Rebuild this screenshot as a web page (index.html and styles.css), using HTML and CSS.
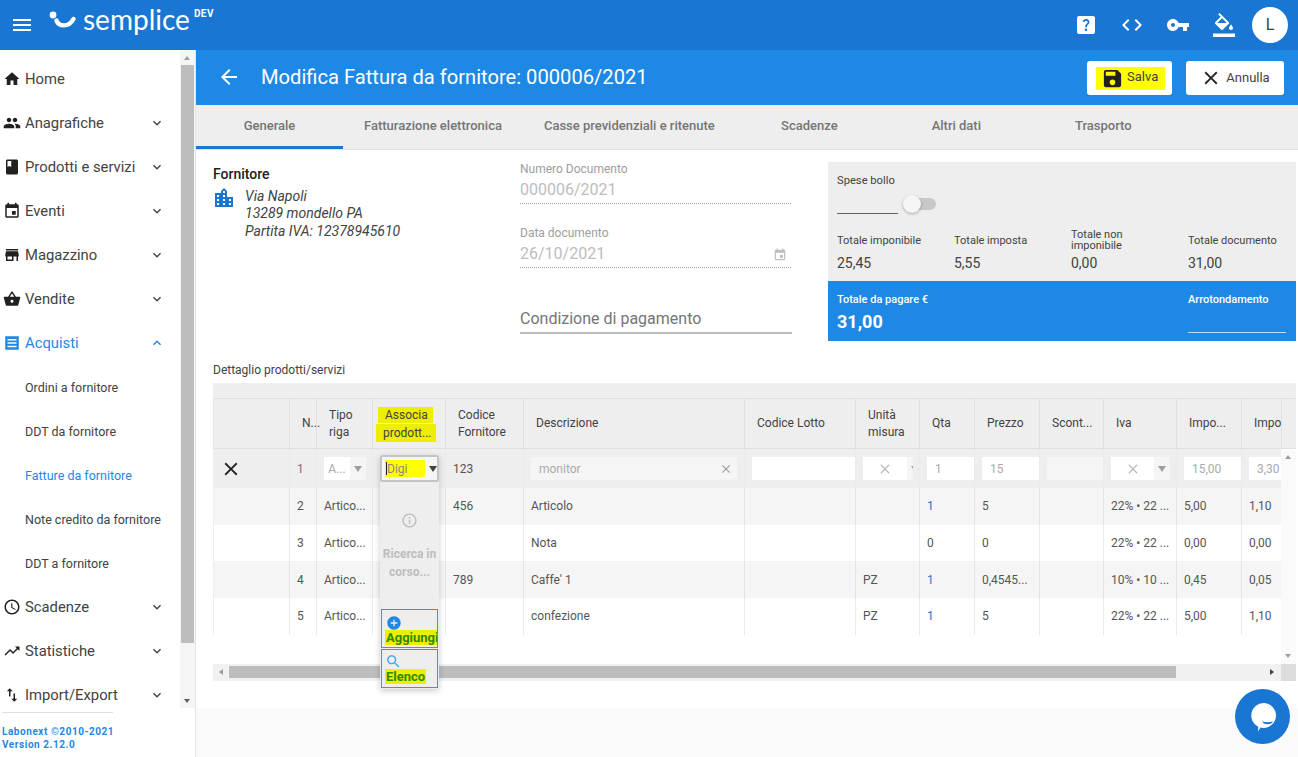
FILE: index.html
```html
<!DOCTYPE html>
<html lang="it">
<head>
<meta charset="utf-8">
<title>Modifica Fattura da fornitore</title>
<link rel="stylesheet" href="styles.css">
</head>
<body>
<svg class="defs" aria-hidden="true">
<symbol id="i-menu" viewBox="0 0 24 24"><path d="M3 18h18v-2H3v2zm0-5h18v-2H3v2zm0-7v2h18V6H3z"/></symbol>
<symbol id="i-home" viewBox="0 0 24 24"><path d="M10 20v-6h4v6h5v-8h3L12 3 2 12h3v8z"/></symbol>
<symbol id="i-people" viewBox="0 0 24 24"><path d="M16 11c1.66 0 2.99-1.34 2.99-3S17.66 5 16 5c-1.66 0-3 1.34-3 3s1.34 3 3 3zm-8 0c1.66 0 2.99-1.34 2.99-3S9.66 5 8 5C6.34 5 5 6.34 5 8s1.34 3 3 3zm0 2c-2.33 0-7 1.17-7 3.5V19h14v-2.5c0-2.33-4.67-3.5-7-3.5zm8 0c-.29 0-.62.02-.97.05 1.16.84 1.97 1.97 1.97 3.45V19h6v-2.5c0-2.33-4.67-3.5-7-3.5z"/></symbol>
<symbol id="i-book" viewBox="0 0 24 24"><path d="M18 2H6c-1.1 0-2 .9-2 2v16c0 1.1.9 2 2 2h12c1.1 0 2-.9 2-2V4c0-1.1-.9-2-2-2zM6 4h5v8l-2.5-1.5L6 12V4z"/></symbol>
<symbol id="i-event" viewBox="0 0 24 24"><path d="M17 12h-5v5h5v-5zM16 1v2H8V1H6v2H5c-1.11 0-1.99.9-1.99 2L3 19c0 1.1.89 2 2 2h14c1.1 0 2-.9 2-2V5c0-1.1-.9-2-2-2h-1V1h-2zm3 18H5V8h14v11z"/></symbol>
<symbol id="i-store" viewBox="0 0 24 24"><path d="M20 4H4v2h16V4zm1 10v-2l-1-5H4l-1 5v2h1v6h10v-6h4v6h2v-6h1zm-9 4H6v-4h6v4z"/></symbol>
<symbol id="i-basket" viewBox="0 0 24 24"><path d="M17.21 9l-4.38-6.56c-.19-.28-.51-.42-.83-.42-.32 0-.64.14-.83.43L6.79 9H2c-.55 0-1 .45-1 1 0 .09.01.18.04.27l2.54 9.27c.23.84 1 1.46 1.92 1.46h13c.92 0 1.69-.62 1.93-1.46l2.54-9.27L23 10c0-.55-.45-1-1-1h-4.79zM9 9l3-4.4L15 9H9zm3 8c-1.1 0-2-.9-2-2s.9-2 2-2 2 .9 2 2-.9 2-2 2z"/></symbol>
<symbol id="i-list" viewBox="0 0 24 24"><path fill-rule="evenodd" d="M3 3h18v18H3zM6 6.500h12v2H6zM6 11h12v2H6zM6 15.500h12v2H6z"/></symbol>
<symbol id="i-clock" viewBox="0 0 24 24"><path d="M11.99 2C6.47 2 2 6.48 2 12s4.47 10 9.99 10C17.52 22 22 17.52 22 12S17.52 2 11.99 2zM12 20c-4.42 0-8-3.58-8-8s3.58-8 8-8 8 3.58 8 8-3.58 8-8 8zm.5-13H11v6l5.25 3.15.75-1.23-4.5-2.67z"/></symbol>
<symbol id="i-trend" viewBox="0 0 24 24"><path d="M16 6l2.29 2.29-4.88 4.88-4-4L2 16.59 3.41 18l6-6 4 4 6.3-6.29L22 12V6z"/></symbol>
<symbol id="i-swap" viewBox="0 0 24 24"><path d="M9 3L5 6.99h3V14h2V6.99h3L9 3zm7 14.01V10h-2v7.01h-3L15 21l4-3.99h-3z"/></symbol>
<symbol id="i-down" viewBox="0 0 24 24"><path d="M16.59 8.59L12 13.17 7.41 8.59 6 10l6 6 6-6z"/></symbol>
<symbol id="i-up" viewBox="0 0 24 24"><path d="M12 8l-6 6 1.41 1.41L12 10.83l4.59 4.58L18 14z"/></symbol>
<symbol id="i-back" viewBox="0 0 24 24"><path d="M20 11H7.83l5.59-5.59L12 4l-8 8 8 8 1.41-1.41L7.83 13H20v-2z"/></symbol>
<symbol id="i-save" viewBox="0 0 24 24"><path d="M17 3H5c-1.11 0-2 .9-2 2v14c0 1.1.89 2 2 2h14c1.1 0 2-.9 2-2V7l-4-4zm-5 16c-1.66 0-3-1.34-3-3s1.34-3 3-3 3 1.34 3 3-1.34 3-3 3zm3-10H5V5h10v4z"/></symbol>
<symbol id="i-close" viewBox="0 0 24 24"><path d="M19 6.41L17.59 5 12 10.59 6.41 5 5 6.41 10.59 12 5 17.59 6.41 19 12 13.41 17.59 19 19 17.59 13.41 12z"/></symbol>
<symbol id="i-help" viewBox="0 0 24 24"><path d="M19 3H5c-1.1 0-2 .9-2 2v14c0 1.1.9 2 2 2h14c1.1 0 2-.9 2-2V5c0-1.1-.9-2-2-2zm-6.99 15c-.7 0-1.26-.56-1.26-1.26 0-.71.56-1.25 1.26-1.25.71 0 1.25.54 1.25 1.25-.01.69-.54 1.26-1.25 1.26zm3.01-7.4c-.76 1.11-1.48 1.46-1.87 2.17-.16.29-.22.48-.22 1.41h-1.82c0-.49-.08-1.29.31-1.98.49-.87 1.42-1.39 1.96-2.16.57-.81.25-2.33-1.37-2.33-1.06 0-1.58.8-1.8 1.48l-1.65-.7C9.01 7.15 10.22 6 11.99 6c1.48 0 2.49.67 3.01 1.52.44.72.7 2.07.03 3.08z"/></symbol>
<symbol id="i-code" viewBox="0 0 24 24"><path d="M9.4 16.6L4.8 12l4.6-4.6L8 6l-6 6 6 6 1.4-1.4zm5.2 0l4.6-4.6-4.6-4.6L16 6l6 6-6 6-1.4-1.4z"/></symbol>
<symbol id="i-key" viewBox="0 0 24 24"><path d="M12.65 10C11.83 7.67 9.61 6 7 6c-3.31 0-6 2.69-6 6s2.69 6 6 6c2.61 0 4.83-1.67 5.65-4H17v4h4v-4h2v-4H12.65zM7 14c-1.1 0-2-.9-2-2s.9-2 2-2 2 .9 2 2-.9 2-2 2z"/></symbol>
<symbol id="i-fill" viewBox="0 0 24 24"><path d="M16.56 8.94L7.62 0 6.21 1.41l2.38 2.38-5.15 5.15c-.59.59-.59 1.54 0 2.12l5.5 5.5c.29.29.68.44 1.06.44s.77-.15 1.06-.44l5.5-5.5c.59-.58.59-1.53 0-2.12zM5.21 10L10 5.21 14.79 10H5.21zM19 11.5s-2 2.17-2 3.5c0 1.1.9 2 2 2s2-.9 2-2c0-1.33-2-3.5-2-3.5zM1 20.5h22V24H1z"/></symbol>
<symbol id="i-city" viewBox="0 0 24 24"><path d="M15 11V5l-3-3-3 3v2H3v14h18V11h-6zm-8 8H5v-2h2v2zm0-4H5v-2h2v2zm0-4H5V9h2v2zm6 8h-2v-2h2v2zm0-4h-2v-2h2v2zm0-4h-2V9h2v2zm0-4h-2V5h2v2zm6 12h-2v-2h2v2zm0-4h-2v-2h2v2z"/></symbol>
<symbol id="i-info" viewBox="0 0 24 24"><path d="M11 7h2v2h-2zm0 4h2v6h-2zm1-9C6.48 2 2 6.48 2 12s4.48 10 10 10 10-4.48 10-10S17.52 2 12 2zm0 18c-4.41 0-8-3.59-8-8s3.59-8 8-8 8 3.59 8 8-3.59 8-8 8z"/></symbol>
<symbol id="i-add" viewBox="0 0 24 24"><path d="M12 2C6.48 2 2 6.48 2 12s4.48 10 10 10 10-4.48 10-10S17.52 2 12 2zm5 11h-4v4h-2v-4H7v-2h4V7h2v4h4v2z"/></symbol>
<symbol id="i-search" viewBox="0 0 24 24"><path d="M15.5 14h-.79l-.28-.27C15.41 12.59 16 11.11 16 9.5 16 5.91 13.09 3 9.5 3S3 5.91 3 9.5 5.91 16 9.5 16c1.61 0 3.09-.59 4.23-1.57l.27.28v.79l5 4.99L20.49 19l-4.99-5zm-6 0C7.01 14 5 11.99 5 9.5S7.01 5 9.5 5 14 7.01 14 9.5 11.99 14 9.5 14z"/></symbol>
<symbol id="i-cal" viewBox="0 0 24 24"><path d="M17 12h-5v5h5v-5zM16 1v2H8V1H6v2H5c-1.11 0-1.99.9-1.99 2L3 19c0 1.1.89 2 2 2h14c1.1 0 2-.9 2-2V5c0-1.1-.9-2-2-2h-1V1h-2zm3 18H5V8h14v11z"/></symbol>
</svg>

<header class="topbar">
  <svg class="top-menu"><use href="#i-menu"/></svg>
  <div class="logo">
    <svg class="logo-mark" viewBox="0 0 28 20"><circle cx="4" cy="4" r="3.4"/><path d="M7.5 9.5c2 6 12 7.5 17-1.5" /></svg>
    <span class="logo-name">semplice</span>
    <span class="logo-dev">DEV</span>
  </div>
  <div class="top-actions">
    <svg class="top-icon"><use href="#i-help"/></svg>
    <svg class="top-icon"><use href="#i-code"/></svg>
    <svg class="top-icon"><use href="#i-key"/></svg>
    <svg class="top-icon"><use href="#i-fill"/></svg>
    <div class="avatar">L</div>
  </div>
</header>

<div class="app">
  <aside class="sidebar">
    <div class="side-scroll">
      <nav class="nav">
        <a class="nav-item"><svg class="nav-icon"><use href="#i-home"/></svg>Home</a>
        <a class="nav-item"><svg class="nav-icon"><use href="#i-people"/></svg>Anagrafiche<svg class="chev"><use href="#i-down"/></svg></a>
        <a class="nav-item"><svg class="nav-icon"><use href="#i-book"/></svg>Prodotti e servizi<svg class="chev"><use href="#i-down"/></svg></a>
        <a class="nav-item"><svg class="nav-icon"><use href="#i-event"/></svg>Eventi<svg class="chev"><use href="#i-down"/></svg></a>
        <a class="nav-item"><svg class="nav-icon"><use href="#i-store"/></svg>Magazzino<svg class="chev"><use href="#i-down"/></svg></a>
        <a class="nav-item"><svg class="nav-icon"><use href="#i-basket"/></svg>Vendite<svg class="chev"><use href="#i-down"/></svg></a>
        <a class="nav-item active"><svg class="nav-icon"><use href="#i-list"/></svg>Acquisti<svg class="chev"><use href="#i-up"/></svg></a>
        <a class="nav-sub">Ordini a fornitore</a>
        <a class="nav-sub">DDT da fornitore</a>
        <a class="nav-sub active">Fatture da fornitore</a>
        <a class="nav-sub">Note credito da fornitore</a>
        <a class="nav-sub">DDT a fornitore</a>
        <a class="nav-item"><svg class="nav-icon"><use href="#i-clock"/></svg>Scadenze<svg class="chev"><use href="#i-down"/></svg></a>
        <a class="nav-item"><svg class="nav-icon"><use href="#i-trend"/></svg>Statistiche<svg class="chev"><use href="#i-down"/></svg></a>
        <a class="nav-item"><svg class="nav-icon"><use href="#i-swap"/></svg>Import/Export<svg class="chev"><use href="#i-down"/></svg></a>
      </nav>
      <div class="vbar side-bar">
        <span class="arrow-up"></span>
        <span class="side-thumb"></span>
        <span class="arrow-down"></span>
      </div>
    </div>
    <div class="side-foot">
      <div>Labonext ©2010-2021</div>
      <div>Version 2.12.0</div>
    </div>
  </aside>

  <main class="content">
    <div class="sheet">
      <div class="page-head">
        <svg class="back"><use href="#i-back"/></svg>
        <h1 class="page-title">Modifica Fattura da fornitore: 000006/2021</h1>
        <button class="btn btn-save"><span class="mark-save"><svg class="save-icon"><use href="#i-save"/></svg><span class="save-label">Salva</span></span></button>
        <button class="btn btn-cancel"><svg class="btn-icon"><use href="#i-close"/></svg>Annulla</button>
      </div>
      <div class="tabs">
        <div class="tab selected">Generale</div>
        <div class="tab">Fatturazione elettronica</div>
        <div class="tab">Casse previdenziali e ritenute</div>
        <div class="tab">Scadenze</div>
        <div class="tab">Altri dati</div>
        <div class="tab">Trasporto</div>
      </div>

      <section class="form">
        <div class="supplier">
          <div class="supplier-title">Fornitore</div>
          <div class="supplier-body">
            <svg class="city"><use href="#i-city"/></svg>
            <address class="supplier-addr">Via Napoli<br>13289 mondello PA<br>Partita IVA: 12378945610</address>
          </div>
        </div>
        <div class="fields">
          <div class="field">
            <div class="field-label">Numero Documento</div>
            <div class="field-value">000006/2021</div>
          </div>
          <div class="field">
            <div class="field-label">Data documento</div>
            <div class="field-value">26/10/2021<svg class="cal"><use href="#i-cal"/></svg></div>
          </div>
          <div class="field-pay">Condizione di pagamento</div>
        </div>
        <div class="totals">
          <div class="totals-grey">
            <div class="tot-label">Spese bollo</div>
            <div class="bollo">
              <span class="bollo-input"></span>
              <span class="toggle"><span class="knob"></span></span>
            </div>
            <div class="tot-grid">
              <div><div class="tot-head">Totale imponibile</div><div class="tot-val">25,45</div></div>
              <div><div class="tot-head">Totale imposta</div><div class="tot-val">5,55</div></div>
              <div><div class="tot-head">Totale non imponibile</div><div class="tot-val">0,00</div></div>
              <div><div class="tot-head">Totale documento</div><div class="tot-val">31,00</div></div>
            </div>
          </div>
          <div class="totals-blue">
            <div>
              <div class="pay-label">Totale da pagare €</div>
              <div class="pay-val">31,00</div>
            </div>
            <div class="round">
              <div class="pay-label">Arrotondamento</div>
            </div>
          </div>
        </div>
      </section>

      <div class="detail-label">Dettaglio prodotti/servizi</div>

      <section class="grid">
        <div class="grid-band"></div>
        <div class="grid-head">
          <div class="cols head-row">
            <div class="hc"></div>
            <div class="hc hc-n">N...</div>
            <div class="hc">Tipo riga</div>
            <div class="hc hc-assoc"><span class="mark">Associa</span><br><span class="mark mark-b">prodott...</span></div>
            <div class="hc">Codice Fornitore</div>
            <div class="hc">Descrizione</div>
            <div class="hc">Codice Lotto</div>
            <div class="hc">Unità misura</div>
            <div class="hc">Qta</div>
            <div class="hc">Prezzo</div>
            <div class="hc">Scont...</div>
            <div class="hc">Iva</div>
            <div class="hc">Impo...</div>
            <div class="hc hc-last">Impo</div>
          </div>
        </div>
        <div class="grid-body">
          <div class="viewport">
            <div class="cols row row-edit">
              <div class="c c-x"><svg class="row-x"><use href="#i-close"/></svg></div>
              <div class="c muted">1</div>
              <div class="c"><span class="inp inp-sel inp-tipo"><span class="inp-main">A...</span><span class="inp-arrow"><i class="tri"></i></span></span></div>
              <div class="c"></div>
              <div class="c">123</div>
              <div class="c"><span class="inp inp-grey inp-desc">monitor<svg class="inp-x"><use href="#i-close"/></svg></span></div>
              <div class="c"><span class="inp inp-fill"></span></div>
              <div class="c"><span class="inp inp-sel inp-um"><span class="inp-main"><svg class="inp-x2"><use href="#i-close"/></svg></span><span class="inp-arrow"><i class="tri"></i></span></span></div>
              <div class="c"><span class="inp inp-fill">1</span></div>
              <div class="c"><span class="inp inp-fill">15</span></div>
              <div class="c"><span class="inp inp-grey inp-fill"></span></div>
              <div class="c"><span class="inp inp-sel inp-iva"><span class="inp-main"><svg class="inp-x2"><use href="#i-close"/></svg></span><span class="inp-arrow"><i class="tri"></i></span></span></div>
              <div class="c"><span class="inp inp-fill">15,00</span></div>
              <div class="c"><span class="inp inp-fill">3,30</span></div>
            </div>
            <div class="cols row row-alt">
              <div class="c"></div><div class="c">2</div><div class="c">Artico...</div><div class="c"></div><div class="c">456</div><div class="c">Articolo</div><div class="c"></div><div class="c"></div><div class="c num">1</div><div class="c">5</div><div class="c"></div><div class="c">22% • 22 ...</div><div class="c">5,00</div><div class="c">1,10</div>
            </div>
            <div class="cols row">
              <div class="c"></div><div class="c">3</div><div class="c">Artico...</div><div class="c"></div><div class="c"></div><div class="c">Nota</div><div class="c"></div><div class="c"></div><div class="c">0</div><div class="c">0</div><div class="c"></div><div class="c">22% • 22 ...</div><div class="c">0,00</div><div class="c">0,00</div>
            </div>
            <div class="cols row row-alt">
              <div class="c"></div><div class="c">4</div><div class="c">Artico...</div><div class="c"></div><div class="c">789</div><div class="c">Caffe' 1</div><div class="c"></div><div class="c">PZ</div><div class="c num">1</div><div class="c">0,4545...</div><div class="c"></div><div class="c">10% • 10 ...</div><div class="c">0,45</div><div class="c">0,05</div>
            </div>
            <div class="cols row">
              <div class="c"></div><div class="c">5</div><div class="c">Artico...</div><div class="c"></div><div class="c"></div><div class="c">confezione</div><div class="c"></div><div class="c">PZ</div><div class="c num">1</div><div class="c">5</div><div class="c"></div><div class="c">22% • 22 ...</div><div class="c">5,00</div><div class="c">1,10</div>
            </div>
          </div>
          <div class="vbar grid-vbar">
            <span class="arrow-up"></span>
            <span class="arrow-down"></span>
          </div>
        </div>
        <div class="hbar">
          <span class="arrow-left"></span>
          <span class="hthumb"></span>
          <span class="arrow-right"></span>
          <span class="corner"></span>
        </div>

        <div class="combo">
          <div class="combo-input">
            <span class="combo-mark"><span class="caret"></span>Digi</span>
            <i class="tri tri-dark"></i>
          </div>
          <div class="combo-panel">
            <svg class="combo-info"><use href="#i-info"/></svg>
            <div class="combo-msg">Ricerca in corso...</div>
            <div class="combo-btn">
              <svg class="combo-add"><use href="#i-add"/></svg>
              <span class="combo-text">Aggiungi</span>
            </div>
            <div class="combo-btn">
              <svg class="combo-search"><use href="#i-search"/></svg>
              <span class="combo-text">Elenco</span>
            </div>
          </div>
        </div>
      </section>
    </div>
  </main>
</div>

<div class="chat">
  <svg class="chat-icon" viewBox="0 0 32 32"><path class="chat-bubble" d="M16.500 2a12.500 12.500 0 0 1 0 25c-1 0-2-.1-3-.4L11 30.500l.2-4.800A12.500 12.500 0 0 1 16.500 2z"/><path class="chat-smile" d="M15 20.600c3.500 .8 8 .8 11 0c-1 3.400-10 3.400-11 0z"/></svg>
</div>
</body>
</html>
```

FILE: styles.css
```css
* { box-sizing: border-box; }
html, body { margin: 0; height: 757px; overflow: hidden; }
body { font-family: Roboto, "Liberation Sans", sans-serif; color: #424242; background: #fafafa; }
.defs { position: absolute; width: 0; height: 0; }
svg { display: block; fill: currentColor; flex: none; }

/* top bar */
.topbar { height: 50px; background: #1976d2; display: flex; align-items: center; color: #fff; padding-left: 10px; padding-right: 10px; }
.top-menu { width: 24px; height: 24px; }
.logo { display: flex; align-items: center; margin-left: 15px; height: 50px; position: relative; }
.logo-mark { width: 28px; height: 20px; margin-top: -9px; }
.logo-mark path { fill: none; stroke: #fff; stroke-width: 4.4; stroke-linecap: round; }
.logo-name { font-family: Lato, Roboto, sans-serif; font-weight: 400; font-size: 28px; margin-left: 6px; margin-top: -13px; }
.logo-dev { font-size: 10px; font-weight: 700; letter-spacing: .5px; align-self: flex-start; margin: 8px 0 0 4px; }
.top-actions { margin-left: auto; display: flex; align-items: center; gap: 22px; }
.top-icon { width: 24px; height: 24px; }
.avatar { width: 36px; height: 36px; border-radius: 50%; background: #fff; color: #424242; font-size: 16px; display: flex; align-items: center; justify-content: center; margin-left: -6px; margin-top: -1px; }

.app { display: flex; height: 707px; }

/* sidebar */
.sidebar { width: 196px; background: #fff; border-right: 1px solid #e4e4e4; flex: none; }
.side-scroll { display: flex; height: 658px; }
.nav { width: 180px; padding-top: 7px; overflow: hidden; flex: none; }
.nav-item { height: 44px; display: flex; align-items: center; padding: 0 15px 0 3px; font-size: 14.8px; color: #424242; }
.nav-item.active { color: #1e88e5; }
.nav-icon { width: 18px; height: 18px; margin-right: 4px; color: #212121; }
.active .nav-icon { color: #1e88e5; }
.chev { width: 16px; height: 16px; margin-left: auto; color: #424242; }
.active .chev { color: #1e88e5; }
.nav-sub { height: 44px; display: flex; align-items: center; padding-left: 25px; font-size: 12.5px; color: #424242; }
.nav-sub.active { color: #1e88e5; }
.vbar { background: #f5f5f5; position: relative; display: block; }
.side-bar { width: 15px; }
.side-thumb { position: absolute; left: 1px; right: 1px; top: 15px; height: 578px; background: #bdbdbd; }
.arrow-up, .arrow-down { position: absolute; left: 4px; border-left: 3.5px solid transparent; border-right: 3.5px solid transparent; }
.arrow-up { top: 6px; border-bottom: 4px solid #9e9e9e; }
.arrow-down { bottom: 5px; border-top: 4px solid #616161; }
.side-foot { margin: 4px 82px 0 2px; padding-top: 12px; border-top: 1px solid #e0e0e0; color: #1e88e5; font-size: 10px; font-weight: 700; line-height: 13px; letter-spacing: .55px; white-space: nowrap; }

/* content */
.content { flex: 1; min-width: 0; }
.sheet { background: #fff; height: 658px; position: relative; }
.page-head { height: 55px; background: #1e88e5; color: #fff; display: flex; align-items: center; padding-left: 22px; padding-right: 14px; }
.back { width: 24px; height: 24px; margin: -2px 0 0 -1px; }
.page-title { font-size: 20.15px; font-weight: 400; margin: -2px 0 0 20px; }
.btn { height: 34px; border: 0; background: #fff; border-radius: 3px; font: 400 13px Roboto, sans-serif; color: #424242; display: flex; align-items: center; padding: 0; }
.btn-icon { width: 22px; height: 22px; color: #212121; }
.save-icon { width: 23px; height: 23px; color: #212121; }
.btn-save { margin-left: auto; width: 85px; padding-left: 9px; }
.mark-save { background: #ffff00; display: flex; align-items: center; gap: 3px; height: 23px; width: 69px; padding-left: 5px; margin-top: 1px; }
.save-label { margin-top: -4px; }
.btn-cancel { margin-left: 14px; width: 98px; justify-content: center; gap: 4px; }
.tabs { height: 45px; background: #eee; display: flex; border-bottom: 1px solid #e0e0e0; }
.tab { min-width: 147px; padding: 0 21px 3px; display: flex; align-items: center; justify-content: center; font-size: 13px; color: #757575; font-weight: 500; white-space: nowrap; }
.tab.selected { border-bottom: 3px solid #1976d2; padding-bottom: 0; }

/* form */
.form { display: flex; padding: 12px 2px 0 17px; }
.supplier { width: 307px; flex: none; }
.supplier-title { font-size: 14px; font-weight: 500; color: #212121; line-height: 24px; }
.supplier-body { display: flex; margin-top: 2px; }
.city { width: 24px; height: 24px; color: #1976d2; margin-top: -2px; margin-left: -1.5px; }
.supplier-addr { font-size: 14px; line-height: 17.4px; margin-left: 9.5px; color: #424242; }
.fields { width: 271px; flex: none; }
.field { border-bottom: 1px dotted #9e9e9e; height: 42px; margin-bottom: 22px; position: relative; }
.field-label { font-size: 12px; line-height: 14px; color: #9e9e9e; }
.field-value { font-size: 16px; line-height: 26px; margin-top: 1px; color: #bdbdbd; display: flex; align-items: center; justify-content: space-between; }
.cal { width: 14px; height: 14px; color: #bdbdbd; margin-right: 4px; margin-top: 2px; }
.field-pay { font-size: 16px; color: #757575; line-height: 28px; height: 29px; margin-top: 37px; border-bottom: 2px solid #bdbdbd; width: 272px; }
.totals { width: 468px; flex: none; margin-left: 37px; height: 179px; }
.totals-grey { height: 119px; background: #eee; padding: 12px 0 0 9px; }
.tot-label { font-size: 11.2px; line-height: 14px; color: #424242; }
.bollo { display: flex; height: 26px; align-items: flex-end; }
.bollo-input { width: 61px; height: 1px; background: #616161; }
.toggle { width: 32px; height: 12px; background: #c8c8c8; border-radius: 6px; margin-left: 6px; margin-bottom: 4px; position: relative; display: block; }
.knob { position: absolute; left: -1px; top: -3px; width: 18px; height: 18px; border-radius: 50%; background: #f5f5f5; box-shadow: 0 1px 3px rgba(0,0,0,.3); }
.tot-grid { display: grid; grid-template-columns: repeat(4, 117px); margin-top: 15px; }
.tot-head { height: 22px; font-size: 11px; line-height: 11px; display: flex; align-items: center; padding-right: 26px; color: #424242; white-space: normal; }
.tot-grid > div:last-child .tot-head { white-space: nowrap; padding-right: 0; }
.tot-grid > div:first-child .tot-head { white-space: nowrap; padding-right: 0; }
.tot-val { font-size: 14px; line-height: 20px; margin-top: 2px; color: #424242; }
.totals-blue { height: 60px; background: #1e88e5; color: #fff; display: flex; justify-content: space-between; padding: 12px 10px 0 9px; }
.pay-label { font-size: 11px; line-height: 14px; font-weight: 500; color: #fff; }
.pay-val { font-size: 18px; font-weight: 700; line-height: 24px; margin-top: 3px; }
.round { width: 98px; height: 40px; border-bottom: 1px solid #bbdefb; }

/* grid */
.detail-label { font-size: 12px; line-height: 14px; margin: 22px 0 6px 17px; color: #424242; }
.grid { margin: 0 2px 0 17px; position: relative; }
.grid-band { height: 16px; background: #eee; border-bottom: 1px solid #e0e0e0; }
.grid-head { background: #eee; height: 50px; border-bottom: 1px solid #e0e0e0; overflow: hidden; }
.cols { display: grid; grid-template-columns: 77px 27px 56px 73px 78px 221px 111px 64px 55px 65px 64px 73px 65px 40px; width: 1069px; }
.head-row { height: 49px; }
.hc { border-right: 1px solid #e0e0e0; padding: 0 8px 0 12px; font-size: 12px; line-height: 17px; color: #424242; display: flex; align-items: center; }
.hc:first-child { border-left: 1px solid #e8e8e8; }
.hc-n { padding: 0 0 0 12px; }
.hc-assoc { display: block; padding: 7px 0 0 5px; white-space: nowrap; line-height: 18px; }
.hc-last { padding: 0 0 0 12px; overflow: hidden; }
.mark { background: #eeee00; padding: 1px 5px 1px 7px; }
.mark-b { padding: 2px 4px 2px 7px; margin-left: -2px; }
.grid-body { display: flex; height: 215px; background: #fff; }
.viewport { width: 1068px; overflow: hidden; flex: none; }
.row { height: 36.67px; }
.row-edit { height: 39px; background: #eee; }
.row-alt { background: #f5f5f5; }
.c { border-right: 1px solid #eaeaea; padding-left: 7px; font-size: 12px; display: flex; align-items: center; color: #555; white-space: nowrap; overflow: hidden; }
.row-alt .c { border-right-color: #e4e4e4; }
.c:first-child { border-left: 1px solid #eee; }
.c-x { padding-left: 6px; }
.row-x { width: 22px; height: 22px; color: #212121; }
.muted { color: #757575; }
.num { color: #1976d2; }
.inp { height: 23px; display: flex; align-items: center; background: #fff; color: #aaa; font-size: 12px; padding-left: 8px; flex: 1; min-width: 0; overflow: hidden; white-space: nowrap; }
.inp-fill { margin-right: 0; }
.inp-grey { background: #f5f5f5; }
.inp-sel { padding: 0; background: #f5f5f5; }
.inp-main { background: #fff; height: 100%; display: flex; align-items: center; justify-content: center; flex: 1; min-width: 0; color: #aaa; }
.inp-arrow { width: 16px; height: 100%; display: flex; align-items: center; justify-content: center; flex: none; }
.inp-tipo { margin-right: 6px; flex: 1; }
.inp-um { flex: none; width: 50px; }
.inp-um .inp-main { flex: none; width: 44px; }
.inp-iva { margin-right: 6px; }
.inp-desc { margin-right: 7px; position: relative; justify-content: flex-start; }
.inp-x { width: 14px; height: 14px; position: absolute; right: 4px; top: 5px; color: #9e9e9e; }
.inp-x2 { width: 16px; height: 16px; color: #bdbdbd; }
.tri { display: block; border-left: 4px solid transparent; border-right: 4px solid transparent; border-top: 6px solid #9e9e9e; }
.tri-dark { border-top-color: #424242; margin-left: 4px; }
.grid-vbar { width: 15px; background: #fafafa; }
.grid-vbar .arrow-up { top: 6px; left: 4px; border-bottom-color: #9e9e9e; }
.grid-vbar .arrow-down { bottom: 6px; left: 4px; border-top-color: #9e9e9e; }
.hbar { height: 17px; background: #f1f1f1; position: relative; }
.hthumb { position: absolute; left: 16px; top: 2px; width: 947px; height: 12px; background: #bdbdbd; }
.arrow-left, .arrow-right { position: absolute; top: 5px; border-top: 3.5px solid transparent; border-bottom: 3.5px solid transparent; }
.arrow-left { left: 6px; border-right: 4px solid #9e9e9e; }
.arrow-right { left: 1057px; border-left: 4px solid #424242; }
.corner { position: absolute; right: 0; top: 0; width: 15px; height: 17px; background: #dcdcdc; }

/* combo dropdown overlay */
.combo { position: absolute; left: 167px; top: 72px; width: 59px; box-shadow: 0 2px 6px rgba(0,0,0,.2); }
.combo-input { height: 27px; background: #f5f5f5; border: 2px solid #c4c4c4; border-radius: 2px; display: flex; align-items: center; padding-left: 3px; }
.combo-mark { display: flex; align-items: center; width: 42px; height: 17px; background: #ffff00; font-size: 12px; color: #888; padding-left: 1px; position: relative; overflow: hidden; }
.caret { width: 1px; height: 13px; background: #212121; }
.combo-panel { background: #eee; height: 207px; display: flex; flex-direction: column; align-items: center; }
.combo-info { width: 17px; height: 17px; margin-top: 30px; color: #bdbdbd; }
.combo-msg { font-size: 12px; font-weight: 700; color: #bdbdbd; line-height: 17.5px; text-align: center; margin-top: 17px; height: 63px; }
.combo-btn { width: 57px; height: 39px; margin-bottom: 1px; border: 1px solid #2b9af3; padding: 5px 0 0 3px; overflow: hidden; color: #1e88e5; font-size: 13px; line-height: 15px; }
.combo-add { width: 16px; height: 16px; margin-left: 1px; }
.combo-search { width: 17px; height: 17px; margin: -2px 0 0 0; color: #42a5f5; }
.combo-text { display: block; width: max-content; margin-top: -1px; background: #eeee00; color: #2e8b00; font-weight: 700; white-space: nowrap; padding: 0 1px; }

/* chat */
.chat { position: fixed; left: 1235px; top: 689px; width: 55px; height: 55px; border-radius: 50%; background: #1976d2; display: flex; align-items: center; justify-content: center; }
.chat-icon { width: 32px; height: 32px; }
.chat-bubble { fill: #fff; }
.chat-smile { fill: #1976d2; }
```
